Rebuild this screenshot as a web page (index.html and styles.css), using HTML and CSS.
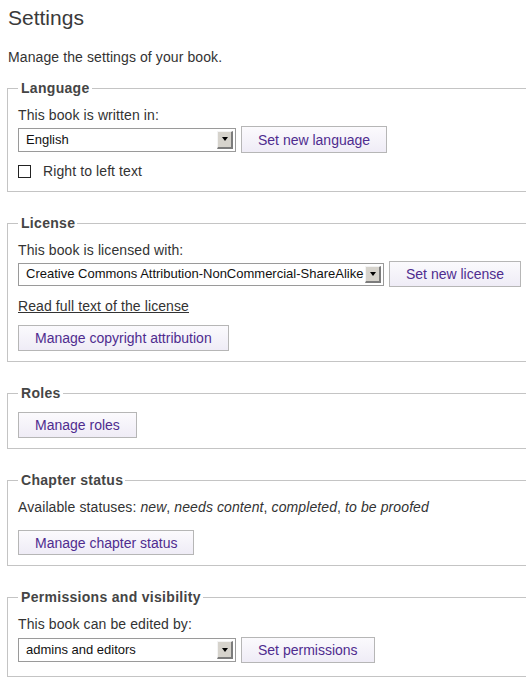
FILE: index.html
```html
<!DOCTYPE html>
<html>
<head>
<meta charset="utf-8">
<title>Settings</title>
<link rel="stylesheet" href="styles.css">
</head>
<body>
<div class="page">
  <h1 class="title">Settings</h1>
  <p class="intro">Manage the settings of your book.</p>

  <fieldset class="group">
    <legend class="group-title">Language</legend>
    <p class="label">This book is written in:</p>
    <div class="row row-lang">
      <div class="select select-short"><span class="select-text">English</span><span class="arrow"><span class="tri"></span></span></div>
      <span class="btn">Set new language</span>
    </div>
    <div class="check-row">
      <span class="checkbox"></span><span class="check-label">Right to left text</span>
    </div>
  </fieldset>

  <fieldset class="group">
    <legend class="group-title">License</legend>
    <p class="label">This book is licensed with:</p>
    <div class="row row-license">
      <div class="select select-long"><span class="select-text">Creative Commons Attribution-NonCommercial-ShareAlike</span><span class="arrow"><span class="tri"></span></span></div>
      <span class="btn">Set new license</span>
    </div>
    <p class="link-line"><a class="link" href="#">Read full text of the license</a></p>
    <div class="btn-line btn-line-license"><span class="btn">Manage copyright attribution</span></div>
  </fieldset>

  <fieldset class="group">
    <legend class="group-title">Roles</legend>
    <div class="btn-line btn-line-roles"><span class="btn">Manage roles</span></div>
  </fieldset>

  <fieldset class="group">
    <legend class="group-title">Chapter status</legend>
    <p class="label">Available statuses: <em>new</em>, <em>needs content</em>, <em>completed</em>, <em>to be proofed</em></p>
    <div class="btn-line btn-line-status"><span class="btn">Manage chapter status</span></div>
  </fieldset>

  <fieldset class="group group-last">
    <legend class="group-title">Permissions and visibility</legend>
    <p class="label">This book can be edited by:</p>
    <div class="row row-perm">
      <div class="select select-short"><span class="select-text">admins and editors</span><span class="arrow"><span class="tri"></span></span></div>
      <span class="btn">Set permissions</span>
    </div>
  </fieldset>
</div>
</body>
</html>
```
FILE: styles.css
```css
html, body {
  margin: 0;
  padding: 0;
  background: #fff;
  overflow: hidden;
}

.page {
  font-family: "Liberation Sans", Arial, sans-serif;
  font-size: 14px;
  line-height: 18px;
  color: #333;
  letter-spacing: 0.1px;
  padding-left: 7px;
  overflow: hidden;
}

.title {
  margin: 6px 0 0 1px;
  font-size: 21px;
  line-height: 24px;
  font-weight: normal;
  color: #3a3a3a;
  letter-spacing: 0;
}

.intro {
  margin: 18px 0 0 1px;
}

.group {
  margin: 13px -40px 0 0;
  border: 1px solid #c4c4c4;
  padding: 0 10px 10px 10px;
  min-width: 0;
}

.group + .group {
  margin-top: 22px;
}

.group-title {
  font-weight: bold;
  color: #454545;
  padding: 0 2px 0 3px;
  line-height: 18px;
  letter-spacing: 0.3px;
}

.label {
  margin: 9px 0 0 0;
}

.row {
  display: flex;
  align-items: center;
  gap: 5px;
  margin-top: 2px;
}

.row-perm {
  margin-top: 4px;
}

.select {
  box-sizing: border-box;
  display: flex;
  align-items: center;
  border: 1px solid #9a9a9a;
  background: #fff;
  font-size: 13px;
  color: #111;
  padding-left: 7px;
  padding-right: 2px;
  letter-spacing: 0;
}

.select-short {
  width: 218px;
  height: 24px;
}

.select-long {
  width: 366px;
  height: 23px;
}

.select-text {
  flex: 1;
  white-space: nowrap;
  overflow: hidden;
}

.arrow {
  box-sizing: border-box;
  width: 16px;
  height: 18px;
  background: #d6d3cc;
  border-top: 1px solid #f4f4f4;
  border-left: 1px solid #f4f4f4;
  border-right: 2px solid #7c7c7c;
  border-bottom: 2px solid #7c7c7c;
  display: flex;
  align-items: center;
  justify-content: center;
  flex: none;
}

.select-long .arrow {
  height: 17px;
}

.tri {
  width: 0;
  height: 0;
  border-left: 3px solid transparent;
  border-right: 3px solid transparent;
  border-top: 4px solid #000;
}

.btn {
  box-sizing: border-box;
  display: inline-flex;
  align-items: center;
  height: 26px;
  padding: 0 16px;
  border: 1px solid #b6b6b6;
  background: linear-gradient(to bottom, #fbfafd, #efecf6);
  color: #4f2c8f;
  font-size: 14px;
  white-space: nowrap;
  letter-spacing: 0;
}

.row-lang .btn {
  height: 27px;
}

.check-row {
  display: flex;
  align-items: center;
  height: 20px;
  margin-top: 8px;
}

.checkbox {
  box-sizing: border-box;
  width: 13px;
  height: 13px;
  border: 1px solid #222;
  background: #fff;
  margin-right: 12px;
}

.link-line {
  margin: 10px 0 0 0;
}

.link {
  color: #333;
  text-decoration: underline;
}

.btn-line {
  margin-top: 10px;
  display: flex;
}

.btn-line-status {
  margin-top: 14px;
}

.btn-line-status .btn {
  height: 25px;
}

.group-last {
  padding-bottom: 13px;
}
```
